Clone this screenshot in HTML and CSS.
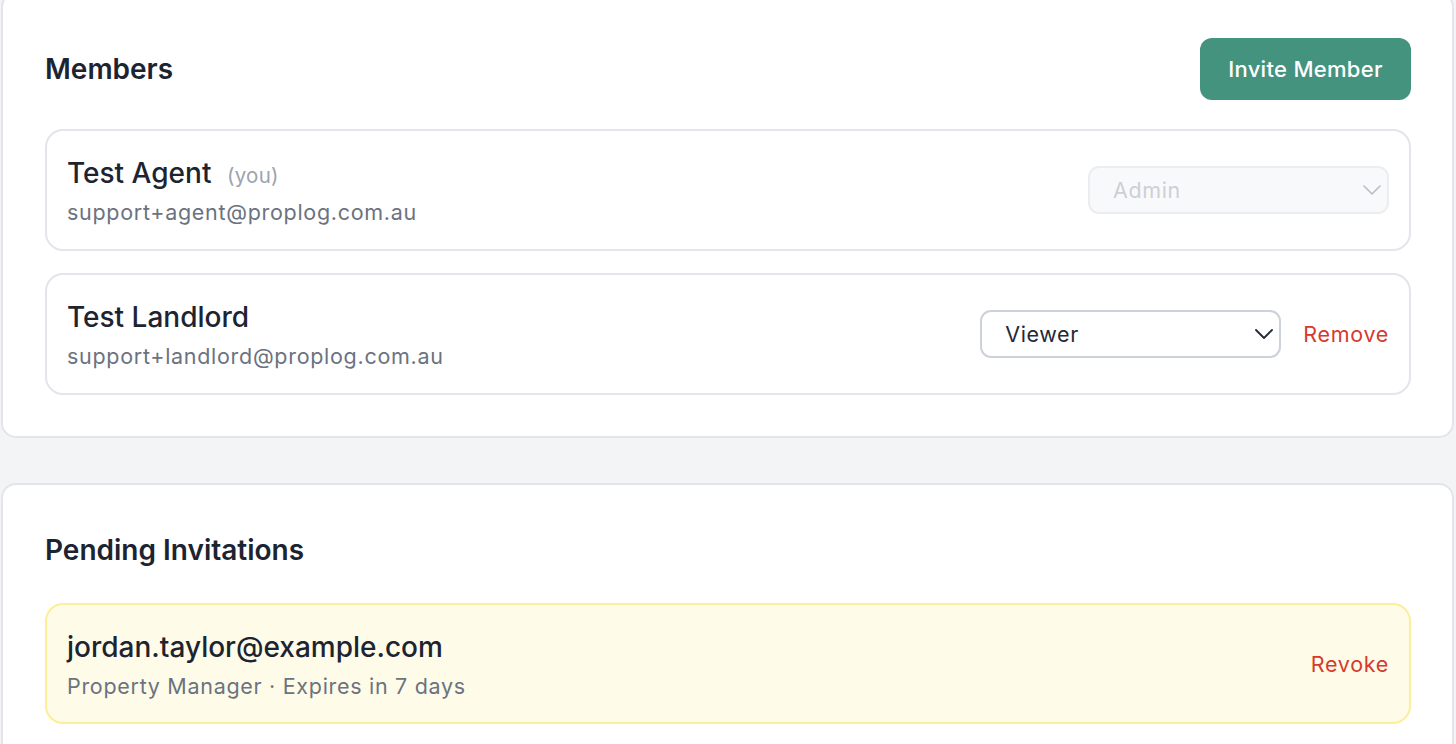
FILE: index.html
```html
<!DOCTYPE html>
<html lang="en">
<head>
    <meta charset="UTF-8">
    <meta name="viewport" content="width=device-width, initial-scale=1.0">
    <title>Team Members</title>
    <link rel="stylesheet" href="styles.css">
</head>
<body>

<main class="page">

    <section class="panel panel-members">
        <div class="panel-head">
            <h2>Members</h2>
            <button class="btn-primary" type="button">Invite Member</button>
        </div>

        <ul class="row-list">
            <li class="row">
                <div class="row-info">
                    <div class="row-title">Test Agent <span class="you">(you)</span></div>
                    <div class="row-sub">support+agent@proplog.com.au</div>
                </div>
                <div class="row-actions">
                    <div class="select-wrap is-disabled">
                        <select disabled>
                            <option>Admin</option>
                        </select>
                        <svg class="chevron" viewBox="0 0 18 10" width="18" height="10"><path d="M1 1l8 8 8-8" fill="none" stroke="currentColor" stroke-width="1.6" stroke-linecap="round" stroke-linejoin="round"/></svg>
                    </div>
                </div>
            </li>
            <li class="row">
                <div class="row-info">
                    <div class="row-title">Test Landlord</div>
                    <div class="row-sub">support+landlord@proplog.com.au</div>
                </div>
                <div class="row-actions">
                    <div class="select-wrap">
                        <select>
                            <option>Admin</option>
                            <option>Property Manager</option>
                            <option selected>Viewer</option>
                        </select>
                        <svg class="chevron" viewBox="0 0 18 10" width="18" height="10"><path d="M1 1l8 8 8-8" fill="none" stroke="currentColor" stroke-width="1.8" stroke-linecap="round" stroke-linejoin="round"/></svg>
                    </div>
                    <button class="btn-link" type="button">Remove</button>
                </div>
            </li>
        </ul>
    </section>

    <section class="panel panel-invites">
        <h2>Pending Invitations</h2>

        <ul class="row-list">
            <li class="row row-invite">
                <div class="row-info">
                    <div class="row-title">jordan.taylor@example.com</div>
                    <div class="row-sub">Property Manager · Expires in 7 days</div>
                </div>
                <div class="row-actions">
                    <button class="btn-link" type="button">Revoke</button>
                </div>
            </li>
        </ul>
    </section>

</main>

</body>
</html>
```

FILE: styles.css
```css
* {box-sizing: border-box; margin: 0; padding: 0;}
html, body {height: 100%; overflow: hidden;}
body {background-color: #f3f4f6; color: #1f2937; font-family: Inter, "Noto Sans", sans-serif;}
ul {list-style: none;}
button, select {font-family: inherit;}

.page {padding: 0 2px 0 1px;}

/* white cards */
.panel {background-color: #fff; border: 2px solid #e3e5ea; border-radius: 15px; padding: 44px 41px 41px 42px;}
.panel-members {margin-top: -8px;}
.panel-invites {margin-top: 45px;}
.panel h2 {font-size: 28px; font-weight: 600; line-height: 42px; color: #1d2431;}
.panel-invites h2 {margin-bottom: 32px;}

.panel-head {display: flex; align-items: center; justify-content: space-between; margin-bottom: 29px;}
.btn-primary {background-color: #43937f; color: #fff; border: none; border-radius: 12px; height: 62px; width: 211px; font-size: 22px; font-weight: 500; letter-spacing: 0.3px; cursor: pointer;}
.btn-primary:hover {background-color: #387f6d;}

/* member / invite rows */
.row-list {display: flex; flex-direction: column; gap: 22px;}
.row {display: flex; align-items: center; justify-content: space-between; height: 122px; border: 2px solid #e3e5ea; border-radius: 18px; padding: 0 20px;}
.row-info {margin-bottom: 1px;}
.row-title {font-size: 28px; font-weight: 500; line-height: 42px; color: #1d2431;}
.row-title .you {font-size: 20.5px; font-weight: 400; line-height: 1; color: #9ca3af; margin-left: 8px; letter-spacing: 0.3px;}
.row-sub {margin-top: 3px; font-size: 21.5px; line-height: 30px; color: #6b7280; letter-spacing: 0.7px;}

.row-invite {height: 121px; background-color: #fefce8; border-color: #fdee9a;}

.row-actions {display: flex; align-items: center; gap: 22px;}

.select-wrap {position: relative; width: 301px;}
.select-wrap select {appearance: none; -webkit-appearance: none; width: 100%; height: 48px; border: 2px solid #cdd1d9; border-radius: 11px; background-color: #fff; padding: 0 40px 0 23px; font-size: 21.5px; letter-spacing: 0.6px; color: #1f2937; outline: none;}
.select-wrap .chevron {position: absolute; right: 8px; top: 19px; color: #1f2937; pointer-events: none;}
.select-wrap.is-disabled select {background-color: #f6f7f9; border-color: #e4e6ea; color: #b8bcc4;}
.select-wrap.is-disabled .chevron {color: #b8bcc4;}

.btn-link {background: none; border: none; font-size: 21.5px; letter-spacing: 0.7px; color: #d63a2f; cursor: pointer; padding: 0;}
.btn-link:hover {text-decoration: underline;}
```
